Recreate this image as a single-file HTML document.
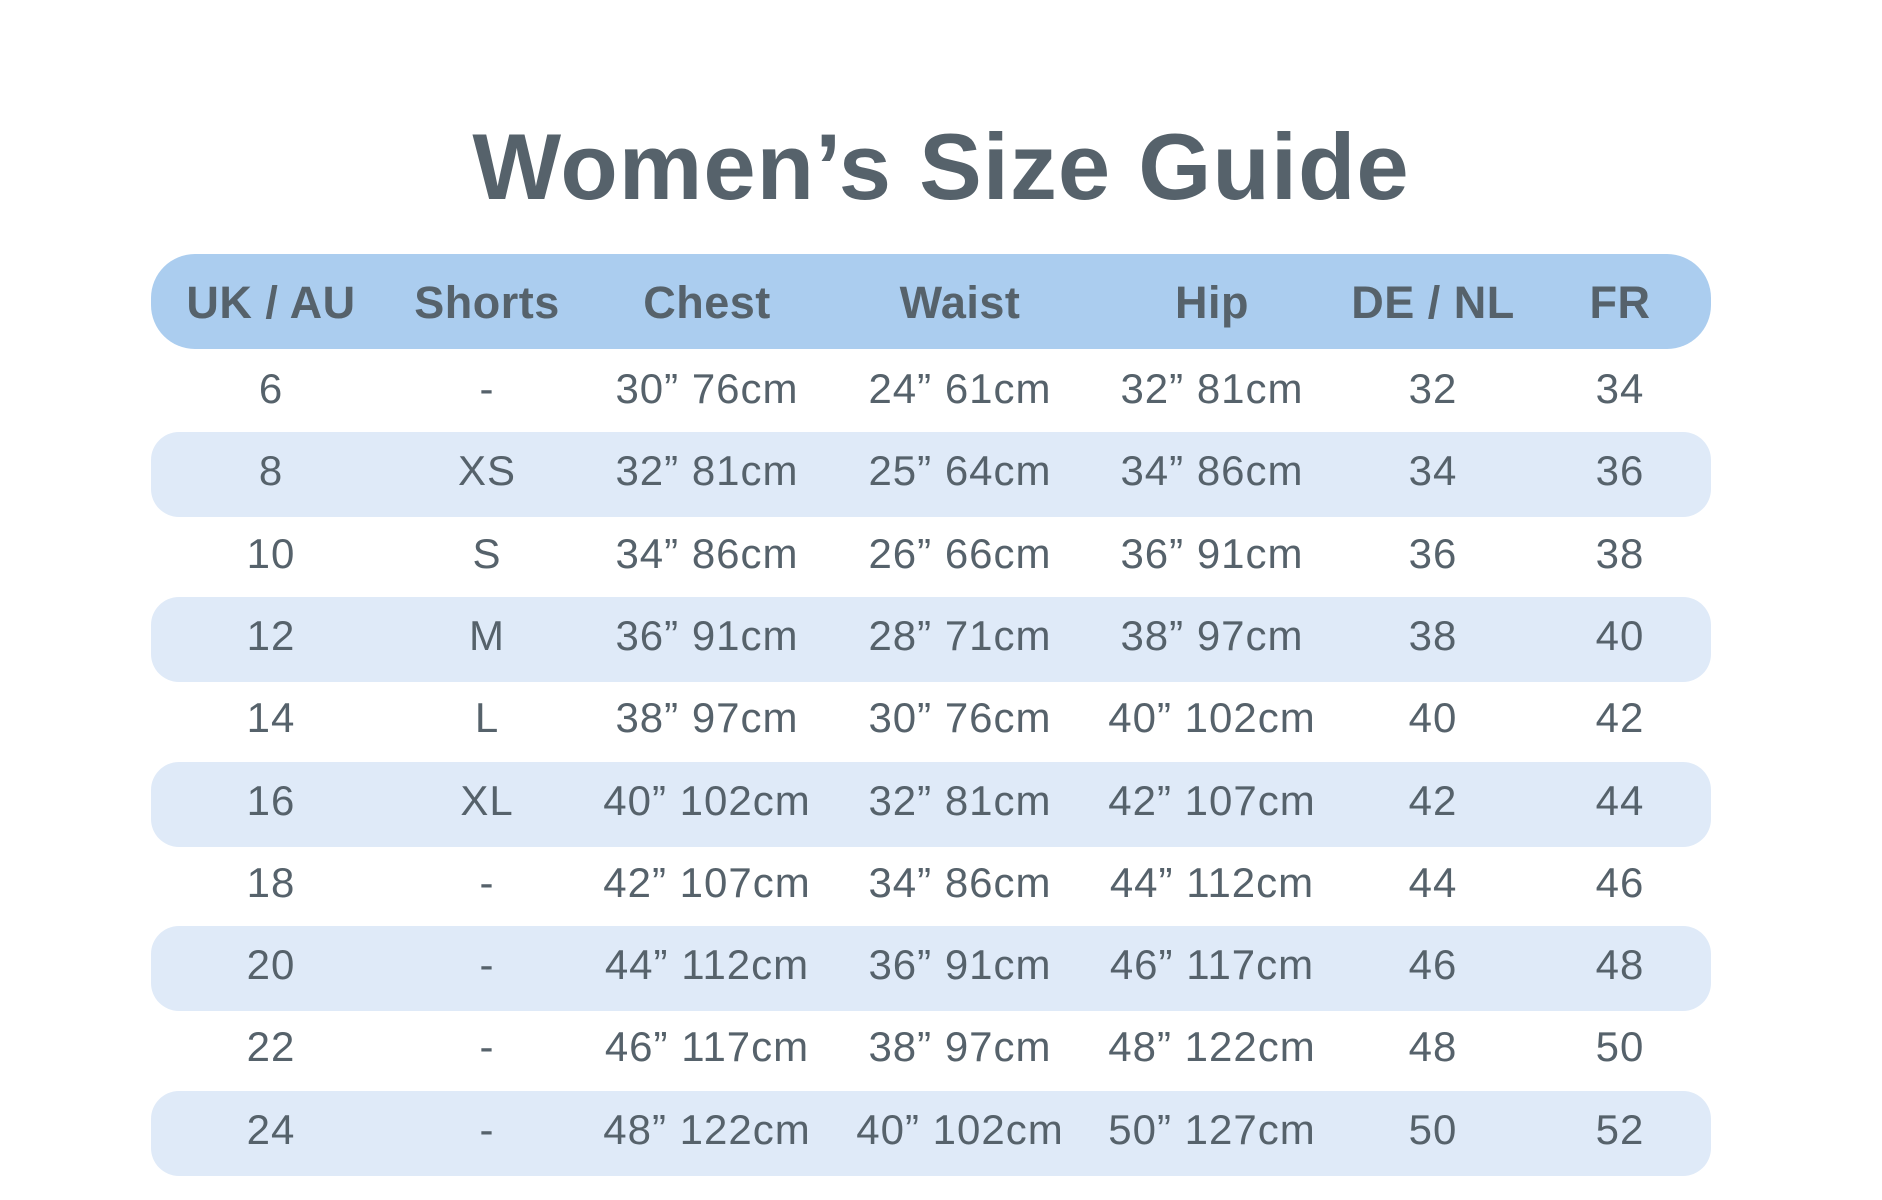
<!DOCTYPE html>
<html><head><meta charset="utf-8"><style>
body{margin:0;width:1882px;height:1200px;background:#fff;font-family:"Liberation Sans",sans-serif;color:#56626b;position:relative;overflow:hidden}
h1{position:absolute;top:112px;left:0;width:1882px;text-align:center;margin:0;font-size:94px;font-weight:bold;line-height:110px;letter-spacing:1px}
.row{position:absolute;left:151px;width:1560px;height:85px}
.row.s{background:#dfeaf8;border-radius:28px}
.row.h{background:#abcdef;border-radius:44px;top:254px;height:95px;font-weight:bold}
.c{position:absolute;top:0;height:100%;display:flex;align-items:center;justify-content:center;width:300px;margin-left:-150px;font-size:42px;white-space:nowrap;letter-spacing:1px;box-sizing:border-box}
.h .c{font-size:45px;padding-top:2px;letter-spacing:0.5px}
.row:not(.h) .c{padding-bottom:7px}
</style></head><body>
<h1>Women’s Size Guide</h1>
<div class="row h">
<div class="c" style="left:120px">UK / AU</div><div class="c" style="left:336px">Shorts</div><div class="c" style="left:556px">Chest</div><div class="c" style="left:809px">Waist</div><div class="c" style="left:1061px">Hip</div><div class="c" style="left:1282px">DE / NL</div><div class="c" style="left:1469px">FR</div>
</div>
<div id="rows"></div>
<script>
var d=[["6","-","30” 76cm","24” 61cm","32” 81cm","32","34"],["8","XS","32” 81cm","25” 64cm","34” 86cm","34","36"],["10","S","34” 86cm","26” 66cm","36” 91cm","36","38"],["12","M","36” 91cm","28” 71cm","38” 97cm","38","40"],["14","L","38” 97cm","30” 76cm","40” 102cm","40","42"],["16","XL","40” 102cm","32” 81cm","42” 107cm","42","44"],["18","-","42” 107cm","34” 86cm","44” 112cm","44","46"],["20","-","44” 112cm","36” 91cm","46” 117cm","46","48"],["22","-","46” 117cm","38” 97cm","48” 122cm","48","50"],["24","-","48” 122cm","40” 102cm","50” 127cm","50","52"]];
var x=[120,336,556,809,1061,1282,1469],h="";
d.forEach(function(r,i){h+='<div class="row'+(i%2?' s':'')+'" style="top:'+(350+82.3*i)+'px">';r.forEach(function(t,j){h+='<div class="c" style="left:'+x[j]+'px">'+t+'</div>'});h+='</div>'});
document.getElementById('rows').innerHTML=h;
</script>
</body></html>
